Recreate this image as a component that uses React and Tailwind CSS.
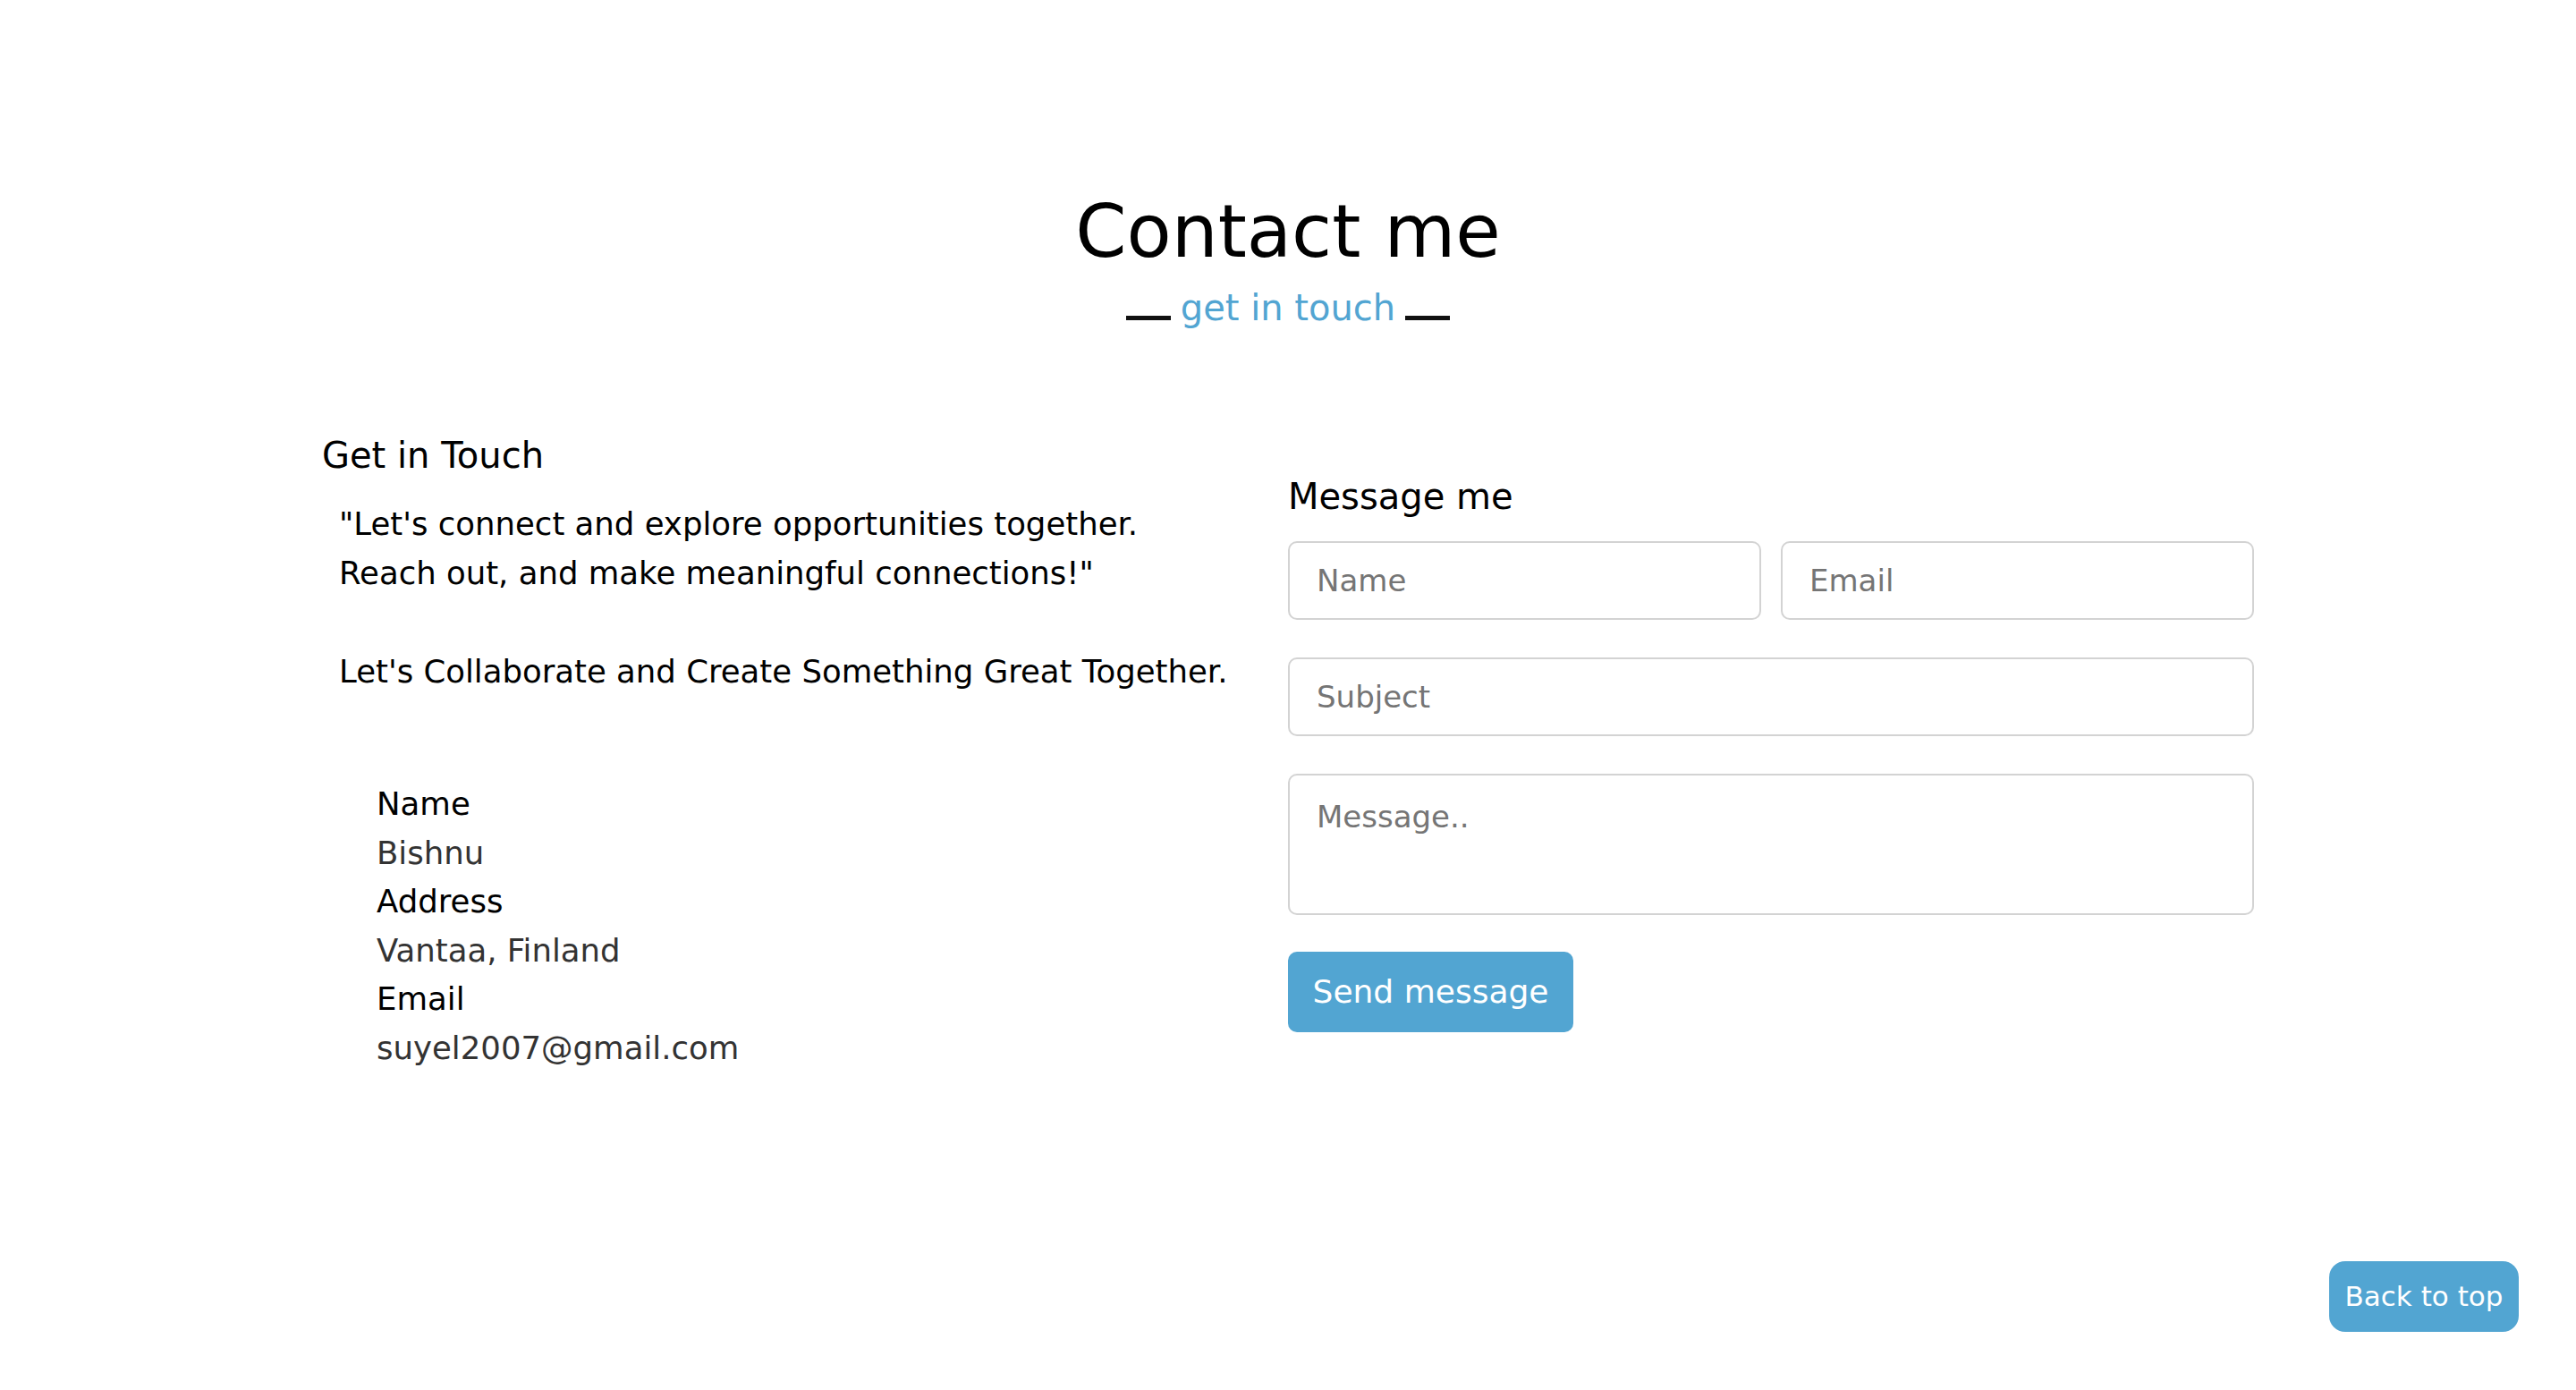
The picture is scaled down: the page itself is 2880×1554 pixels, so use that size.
export default function App() {
  const font = { fontFamily: "'DejaVu Sans', 'Liberation Sans', sans-serif" }

  return (
    <div className="min-h-screen bg-white text-black" style={font}>
      {/* Heading */}
      <section className="pt-[208px]">
        <h2 className="text-center text-[82px] leading-[101px] font-normal">Contact me</h2>
        <p className="mt-[5px] text-center text-[40px] leading-[61px] text-[#52a5d2]">
          <span className="inline-block w-[50px] h-[5px] bg-[#111] mr-[11px]" />
          get in touch
          <span className="inline-block w-[50px] h-[5px] bg-[#111] ml-[11px]" />
        </p>
      </section>

      {/* Content */}
      <div className="w-3/4 mx-auto grid grid-cols-2 items-center mt-[104px]">
        <div>
          <h3 className="text-[40px] leading-[60px] font-normal">Get in Touch</h3>
          <p className="mt-[19px] pl-[19px] text-[35.5px] leading-[55px]">
            "Let's connect and explore opportunities together.
            <br />
            Reach out, and make meaningful connections!"
            <br />
            <br />
            Let's Collaborate and Create Something Great Together.
          </p>
          <div className="mt-[94px] pl-[61px] text-[35.5px] leading-[54.5px]">
            <p>Name</p>
            <p className="text-[#333]">Bishnu</p>
            <p>Address</p>
            <p className="text-[#333]">Vantaa, Finland</p>
            <p>Email</p>
            <p className="text-[#333]">suyel2007@gmail.com</p>
          </div>
        </div>

        <div>
          <h3 className="text-[40px] leading-[60px] font-normal">Message me</h3>
          <form className="mt-[20px] flex flex-col gap-[42px]" onSubmit={(e) => e.preventDefault()}>
            <div className="grid grid-cols-2 gap-[22px]">
              <input
                placeholder="Name"
                className="h-[88px] px-[30px] border-2 border-[#d3d3d3] rounded-[10px] text-[34px] placeholder:text-[#757575] outline-none"
              />
              <input
                placeholder="Email"
                className="h-[88px] px-[30px] border-2 border-[#d3d3d3] rounded-[10px] text-[34px] placeholder:text-[#757575] outline-none"
              />
            </div>
            <input
              placeholder="Subject"
              className="h-[88px] px-[30px] border-2 border-[#d3d3d3] rounded-[10px] text-[34px] placeholder:text-[#757575] outline-none"
            />
            <textarea
              placeholder="Message.."
              className="h-[158px] px-[30px] py-[21px] border-2 border-[#d3d3d3] rounded-[10px] text-[34px] leading-[51px] placeholder:text-[#757575] outline-none resize-none"
            />
            <div>
              <button
                type="submit"
                className="w-[319px] h-[90px] -mt-[1px] bg-[#52a5d2] text-white text-[36px] rounded-[10px]"
              >
                Send message
              </button>
            </div>
          </form>
        </div>
      </div>

      <button className="fixed right-[64px] bottom-[65px] w-[212px] h-[79px] bg-[#52a5d2] text-white text-[31px] rounded-[18px]">
        Back to top
      </button>
    </div>
  )
}
